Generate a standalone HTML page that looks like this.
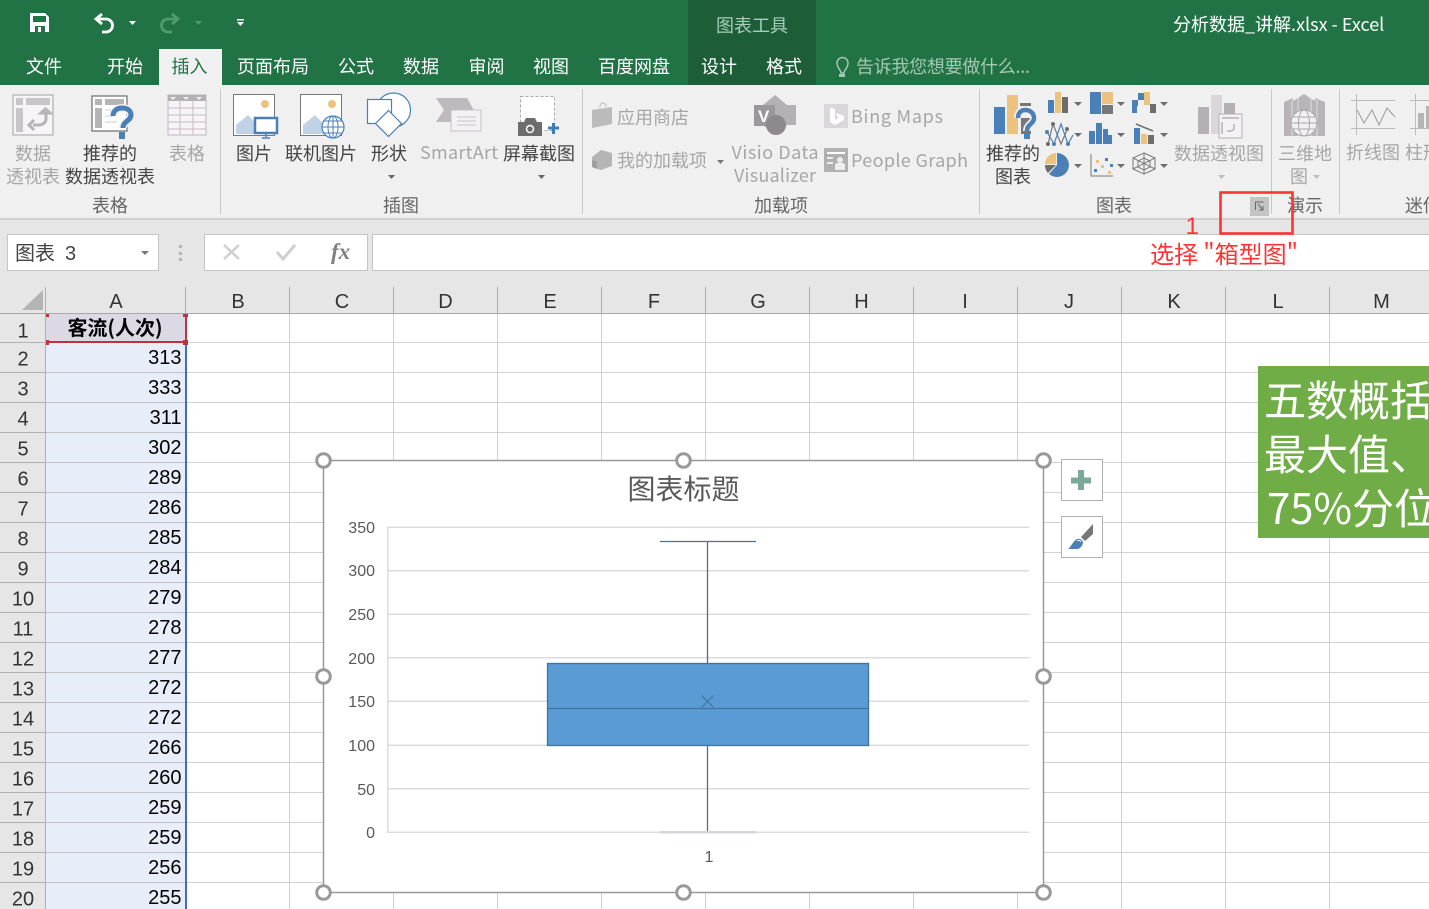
<!DOCTYPE html>
<html lang="zh"><head><meta charset="utf-8"><title>Excel</title>
<style>
html,body{margin:0;padding:0;width:1429px;height:909px;overflow:hidden;background:#fff}
svg{display:block}
text{font-family:"Liberation Sans","Noto Sans CJK SC",sans-serif;font-size:18px}
.cjk text,text.cjk{font-family:"Noto Sans CJK SC","Liberation Sans",sans-serif}
.w{fill:#fff}.d{fill:#a6a6a6}.n{fill:#444}.g{fill:#666}
.m{text-anchor:middle}.e{text-anchor:end}
.num{font-size:20px;fill:#000;text-anchor:end;font-family:"Liberation Sans",sans-serif}
.rh{font-size:20px;fill:#333;text-anchor:middle;font-family:"Liberation Sans",sans-serif}
.ch{font-size:20px;fill:#333;text-anchor:middle;font-family:"Liberation Sans",sans-serif}
.ax{font-size:16px;fill:#595959;text-anchor:end;font-family:"Liberation Sans",sans-serif}
</style></head><body>
<svg width="1429" height="909" viewBox="0 0 1429 909" xmlns="http://www.w3.org/2000/svg">
<!-- title / tabs -->
<rect width="1429" height="85" fill="#217346"/>
<rect x="688" width="128" height="85" fill="#1d5e39"/>
<rect x="159" y="49" width="63" height="36" fill="#f0f0f0"/>
<rect y="85" width="1429" height="133" fill="#f0f0f0"/>
<rect y="218" width="1429" height="2" fill="#d2d2d2"/>
<rect y="220" width="1429" height="94" fill="#e6e6e6"/>

<!-- QAT -->
<path d="M30 13h15l4 4v15H30z" fill="#fff"/><rect x="33" y="16" width="13" height="6" fill="#217346"/><rect x="35" y="26" width="10" height="6" fill="#217346"/><rect x="38" y="27" width="3" height="5" fill="#fff"/>
<path d="M97 19H106a6.500 6.500 0 0 1 0 13H102" fill="none" stroke="#fff" stroke-width="2.800"/><path d="M102 14l-6 5 6 5" fill="none" stroke="#fff" stroke-width="2.800"/>
<path d="M129 21h7l-3.500 4z" fill="#fff"/>
<path d="M177 19H168a6.500 6.500 0 0 0 0 13H172" fill="none" stroke="#4e9a6d" stroke-width="2.800"/><path d="M172 14l6 5-6 5" fill="none" stroke="#4e9a6d" stroke-width="2.800"/>
<path d="M195 21h7l-3.500 4z" fill="#4e9a6d"/>
<rect x="237" y="19" width="7" height="1.500" fill="#fff"/><path d="M237 22h7l-3.500 4z" fill="#fff"/>

<g class="cjk">
<text x="716" y="32" fill="#a9cdb8">图表工具</text>
<text x="1173" y="31" class="w">分析数据_讲解.xlsx - Excel</text>
<text x="26" y="73" class="w">文件</text>
<text x="107" y="73" class="w">开始</text>
<text x="171.500" y="73" fill="#217346">插入</text>
<text x="237" y="73" class="w">页面布局</text>
<text x="338" y="73" class="w">公式</text>
<text x="403" y="73" class="w">数据</text>
<text x="468.500" y="73" class="w">审阅</text>
<text x="533" y="73" class="w">视图</text>
<text x="598" y="73" class="w">百度网盘</text>
<text x="701" y="73" class="w">设计</text>
<text x="766" y="73" class="w">格式</text>
<text x="856" y="73" fill="#a3c9b2" textLength="174">告诉我您想要做什么...</text>
</g>
<path d="M841 73c0-3-4-5-4-10a5.500 5.500 0 0 1 11 0c0 5-4 7-4 10z" fill="none" stroke="#a3c9b2" stroke-width="1.500"/><rect x="839" y="74" width="6" height="3" fill="#a3c9b2"/>

<!-- ribbon separators -->
<g fill="#c8c8c8"><rect x="220" y="89" width="1" height="125"/><rect x="582" y="89" width="1" height="125"/><rect x="979" y="89" width="1" height="125"/><rect x="1271" y="89" width="1" height="125"/><rect x="1339" y="89" width="1" height="125"/></g>

<!-- 表格 group icons -->
<rect x="13" y="95" width="40" height="40" fill="#f6f4f6" stroke="#bdbdbd" stroke-width="1.500"/><rect x="16" y="98" width="7" height="7" fill="#c8c6c8"/><rect x="26" y="98" width="24" height="7" fill="#c8c6c8"/><rect x="16" y="108" width="7" height="24" fill="#c8c6c8"/>
<path d="M46 113v6c0 4-4 6-8 6h-5M41 113h9l-4.500-4zM34 120l-5 5 5 5" fill="none" stroke="#b5b5b5" stroke-width="3"/>
<rect x="92" y="96" width="35" height="35" fill="#fff" stroke="#777" stroke-width="1.300"/><rect x="95" y="99" width="7" height="6" fill="#b4b4b4"/><rect x="105" y="99" width="19" height="6" fill="#b4b4b4"/><rect x="95" y="108" width="7" height="20" fill="#b4b4b4"/>
<g fill="none" stroke="#ccc"><path d="M105 110h8M105 116h8M105 122h12"/></g>
<path d="M113 116c0-5 4-8 9-8c6 0 9 3 9 7c0 6-8 6-8 13" fill="none" stroke="#f0f0f0" stroke-width="8"/>
<path d="M113 116c0-5 4-8 9-8c6 0 9 3 9 7c0 6-8 6-8 13" fill="none" stroke="#4a7fb8" stroke-width="5"/><rect x="119" y="132" width="6" height="7" fill="#4a7fb8"/>
<rect x="168" y="95" width="38" height="40" fill="#f6f4f6" stroke="#bcb8bc"/><rect x="168" y="95" width="38" height="6" fill="#b4b0b4"/><path d="M170 97h6l-3 3zM183 97h6l-3 3zM196 97h6l-3 3z" fill="#f0f0f0"/>
<g stroke="#cbb8c6" fill="none"><path d="M168 108h38M168 115h38M168 122h38M168 129h38M180 101v34M193 101v34"/></g>
<!-- 插图 -->
<rect x="233.500" y="94.500" width="41" height="41" fill="#fff" stroke="#777"/><circle cx="265" cy="104" r="4" fill="#edc27c"/><path d="M236 134v-9l12-10 13 14v5z" fill="#bfd2e6"/>
<rect x="255" y="118" width="22" height="15" fill="#fff" stroke="#4a7fb8" stroke-width="2.500"/><path d="M266 134v3M262 138h8" stroke="#4a7fb8" stroke-width="1.500"/>
<rect x="300.500" y="94.500" width="41" height="41" fill="#fff" stroke="#777"/><circle cx="332" cy="104" r="4" fill="#edc27c"/><path d="M303 134v-9l12-10 13 14v5z" fill="#bfd2e6"/>
<circle cx="333" cy="127" r="11" fill="#fff" stroke="#4a7fb8" stroke-width="1.200"/><ellipse cx="333" cy="127" rx="5" ry="11" fill="none" stroke="#4a7fb8"/><path d="M322 127h22M324 121h18M324 133h18M333 116v22" stroke="#4a7fb8" fill="none"/>
<circle cx="393.500" cy="110" r="17" fill="#fff" stroke="#4a7fb8" stroke-width="1.200"/><rect x="367.500" y="99.500" width="24" height="24" fill="#fff" stroke="#4a7fb8" stroke-width="1.200"/><path d="M388.500 110.500l13 13-13 13-13-13z" fill="#fff" stroke="#4a7fb8" stroke-width="1.200"/>
<!-- SmartArt -->
<path d="M436 98h31l9 16h-20v8h-20l8-12z" fill="#bdb9bd"/><rect x="451" y="110" width="30" height="21" fill="#f4f1f4" stroke="#c4bfc4"/><g stroke="#c8c4c8"><path d="M457 117h19M457 121h19M457 125h19"/></g>
<!-- screenshot -->
<rect x="520.500" y="96.500" width="34" height="34" fill="#fff" stroke="#aaa" stroke-dasharray="3 2"/><path d="M518 122h6l2-4h9l2 4h5v14h-24z" fill="#6d6d6d"/><circle cx="530" cy="129" r="3.500" fill="#6d6d6d" stroke="#fff" stroke-width="1.500"/><path d="M548 128h11M553.500 123v11" stroke="#3f7cbc" stroke-width="3"/>
<!-- Add-ins -->
<path d="M592 110l20-3v17l-20 4z" fill="#bbb"/><path d="M600 108v-2a3 3 0 0 1 6 0v1" fill="none" stroke="#bbb"/>
<path d="M601 150l11 3v13l-11 4-9-3v-10z" fill="#b5b5b5"/><path d="M592 160l5 2v7l-5-2z" fill="#9e9e9e"/>
<path d="M717 160h7l-3.500 4z" fill="#777"/>
<path d="M775 95l12 10h9v20h-9l-12 10-12-10v-20z" fill="#b4b0b4"/><rect x="754" y="105" width="21" height="21" fill="#9b979b"/><circle cx="776" cy="125" r="10" fill="#8d898d"/><text x="758" y="122" class="w" style="font-size:17px;font-weight:bold">V</text>
<rect x="824" y="104" width="24" height="24" fill="#d9d7d9"/><path d="M830 108v14l5 3 9-5v-4l-8-3 2 5-3 2v-11z" fill="#fff"/>
<rect x="824" y="148" width="24" height="24" fill="#b0b0b0"/><rect x="827" y="152" width="18" height="2" fill="#fff"/><rect x="827" y="157" width="6" height="2" fill="#eee"/><rect x="827" y="162" width="6" height="2" fill="#eee"/><circle cx="840" cy="160" r="3" fill="#eee"/><path d="M835 170v-5c0-2 2-2 5-2s5 0 5 2v5z" fill="#eee"/>
<!-- charts -->
<rect x="994" y="107" width="11" height="27" fill="#4a7fb8"/><rect x="1007" y="95" width="11" height="39" fill="#ecc27f"/><rect x="1020" y="103" width="11" height="3" fill="#777"/><rect x="1021" y="118" width="10" height="16" fill="#777"/>
<path d="M1018 118c0-5 3-8 7-8c5 0 9 3 9 8c0 6-7 6-7 13" fill="none" stroke="#f0f0f0" stroke-width="8"/>
<path d="M1018 118c0-5 3-8 7-8c5 0 9 3 9 8c0 6-7 6-7 13" fill="none" stroke="#4a7fb8" stroke-width="4.500"/><rect x="1024" y="133" width="6" height="6" fill="#4a7fb8"/>
<rect x="1048" y="100" width="6" height="13" fill="#4a7fb8"/><rect x="1055" y="92" width="6" height="21" fill="#ecc27f"/><rect x="1062" y="97" width="6" height="16" fill="#6d6d6d"/><path d="M1074 102h8l-4 4z" fill="#6d6d6d"/>
<rect x="1090" y="92" width="11" height="22" fill="#4a7fb8"/><rect x="1102" y="92" width="11" height="12" fill="#ecc27f"/><rect x="1102" y="105" width="11" height="9" fill="#777"/><path d="M1117 102h8l-4 4z" fill="#6d6d6d"/>
<path d="M1132 113v-13h6v-7h6v7h-6v6h-1v7z" fill="#4a7fb8"/><rect x="1144" y="92" width="6" height="13" fill="#ecc27f"/><rect x="1150" y="104" width="6" height="9" fill="#6d6d6d"/><path d="M1160 102h8l-4 4z" fill="#6d6d6d"/>
<path d="M1048 144l5-20 8 20 6-14" fill="none" stroke="#777" stroke-width="1.200"/><path d="M1047 132l7 12 7-20 7 20 5-9" fill="none" stroke="#4a7fb8" stroke-width="1.200"/>
<g fill="#6d6d6d"><circle cx="1053" cy="124" r="2"/><circle cx="1048" cy="144" r="2"/><circle cx="1067" cy="129" r="2"/></g><g fill="#4a7fb8"><circle cx="1047" cy="132" r="2"/><circle cx="1054" cy="144" r="2"/><circle cx="1068" cy="144" r="2"/></g>
<path d="M1074 133h8l-4 4z" fill="#6d6d6d"/>
<rect x="1089" y="131" width="6" height="13" fill="#4a7fb8"/><rect x="1096" y="123" width="6" height="21" fill="#4a7fb8"/><rect x="1103" y="129" width="5" height="15" fill="#4a7fb8"/><rect x="1107" y="135" width="5" height="9" fill="#4a7fb8"/><path d="M1117 133h8l-4 4z" fill="#6d6d6d"/>
<rect x="1134" y="128" width="6" height="16" fill="#4a7fb8"/><rect x="1141" y="134" width="6" height="10" fill="#ecc27f"/><rect x="1148" y="135" width="6" height="9" fill="#6d6d6d"/><path d="M1136 124l17 7" stroke="#6d6d6d" stroke-width="1.500"/><path d="M1160 133h8l-4 4z" fill="#6d6d6d"/>
<path d="M1057 153a12 12 0 1 1-8 21l8-9z" fill="#4a7fb8"/><path d="M1056 153a11 11 0 0 0-11 11h11z" fill="#ecc27f"/><path d="M1045 165h11l-8 8c-2-2-3-5-3-8z" fill="#6d6d6d"/><path d="M1074 164h8l-4 4z" fill="#6d6d6d"/>
<path d="M1091 154v22h22" fill="none" stroke="#777"/><rect x="1094" y="169" width="3" height="3" fill="#4a7fb8"/><rect x="1096" y="160" width="3" height="3" fill="#ecc27f"/><rect x="1101" y="165" width="3" height="3" fill="#ecc27f"/><rect x="1105" y="158" width="3" height="3" fill="#4a7fb8"/><rect x="1108" y="171" width="3" height="3" fill="#ecc27f"/><rect x="1110" y="164" width="3" height="3" fill="#4a7fb8"/><path d="M1117 164h8l-4 4z" fill="#6d6d6d"/>
<path d="M1144 153l11 5v11l-11 5-11-5v-11zM1144 153v21M1133 158l22 11M1155 158l-22 11M1144 158l6 3v6l-6 3-6-3v-6z" fill="none" stroke="#777" stroke-width="1"/><path d="M1160 164h8l-4 4z" fill="#6d6d6d"/>
<!-- pivot chart -->
<rect x="1198" y="107" width="11" height="27" fill="#b4b0b4"/><rect x="1211" y="95" width="11" height="39" fill="#dad6da"/><rect x="1224" y="103" width="11" height="11" fill="#b4b0b4"/><rect x="1219" y="114" width="23" height="24" fill="#f4f2f4" stroke="#b4b0b4"/><path d="M1222 118h17M1222 122v12M1234 124v4c0 2-2 3-4 3h-3" fill="none" stroke="#b4b0b4" stroke-width="1.500"/>
<!-- 3D map -->
<path d="M1284 102l9-4v3l5-3 6-4 6 4 5 3v-3l10 4v34h-41z" fill="#b8b4b8"/><path d="M1292 100v36M1298 98v38M1311 98v38M1317 100v36" stroke="#e0dde0"/>
<circle cx="1304" cy="123" r="13" fill="#f2f0f2" stroke="#aaa"/><ellipse cx="1304" cy="123" rx="5.500" ry="13" fill="none" stroke="#aaa"/><path d="M1291 123h26M1293 117h22M1293 129h22" stroke="#aaa"/>
<!-- sparklines -->
<path d="M1351 100.500h44M1351 128.500h44M1356.500 94v41" fill="none" stroke="#bbb"/><path d="M1357 110l7 13 8-13 7 15 8-17 8 9" fill="none" stroke="#999"/>
<path d="M1410 100.500h19M1410 128.500h19M1415.500 94v41" fill="none" stroke="#bbb"/><rect x="1418" y="113" width="6" height="15" fill="#b5b5b5"/><rect x="1426" y="106" width="3" height="22" fill="#b5b5b5"/>

<!-- ribbon labels -->
<g class="cjk">
<text x="33" y="160" class="d m">数据</text><text x="33" y="183" class="d m">透视表</text>
<text x="110" y="160" class="n m">推荐的</text><text x="110" y="183" class="n m">数据透视表</text>
<text x="187" y="160" class="d m">表格</text>
<text x="110" y="212" class="g m">表格</text>
<text x="254" y="160" class="n m">图片</text>
<text x="321" y="160" class="n m">联机图片</text>
<text x="389" y="160" class="n m">形状</text>
<text x="459" y="159" class="d m" textLength="78">SmartArt</text>
<text x="539" y="160" class="n m">屏幕截图</text>
<text x="401" y="212" class="g m">插图</text>
<text x="617" y="124" class="d">应用商店</text>
<text x="617" y="167" class="d">我的加载项</text>
<text x="775" y="159" class="d m" textLength="87">Visio Data</text>
<text x="775" y="182" class="d m" textLength="82">Visualizer</text>
<text x="851" y="123" class="d" textLength="92">Bing Maps</text>
<text x="851" y="167" class="d" textLength="117">People Graph</text>
<text x="781" y="212" class="g m">加载项</text>
<text x="1013" y="160" class="n m">推荐的</text><text x="1013" y="183" class="n m">图表</text>
<text x="1219" y="160" class="d m">数据透视图</text>
<text x="1114" y="212" class="g m">图表</text>
<text x="1305" y="160" class="d m">三维地</text><text x="1299" y="183" class="d m">图</text>
<text x="1305" y="212" class="g m">演示</text>
<text x="1346" y="159" class="d">折线图</text><text x="1405" y="159" class="d">柱形图</text>
<text x="1405" y="212" class="g">迷你图</text>
</g>
<path d="M388 175h7l-3.500 4zM538 175h7l-3.500 4z" fill="#666"/><path d="M1218 175h7l-3.500 4zM1313 175h7l-3.500 4z" fill="#bbb"/>

<!-- launcher -->
<rect x="1250" y="197" width="19" height="19" fill="#c4c4c4"/><path d="M1255.500 210v-8h8M1258 204l5 6M1259 210h4v-4" fill="none" stroke="#666"/>

<!-- formula bar -->
<rect x="7.500" y="234.500" width="151" height="36" fill="#fff" stroke="#c6c6c6"/>
<text x="15" y="260" class="cjk" style="font-size:20px" fill="#444">图表</text><text x="65" y="260" style="font-size:20px" fill="#444">3</text>
<path d="M141 251h8l-4 4z" fill="#777"/>
<path d="M179 245h3v3h-3zM179 252h3v3h-3zM179 258h3v3h-3z" fill="#b4b4b4"/>
<rect x="204.500" y="234.500" width="163" height="36" fill="#fff" stroke="#c6c6c6"/>
<path d="M224 245l15 14M239 245l-15 14" stroke="#cfcfcf" stroke-width="2.500"/>
<path d="M277 252l6 7 12-14" fill="none" stroke="#cfcfcf" stroke-width="3"/>
<text x="331" y="259" style="font-family:'Liberation Serif',serif;font-style:italic;font-weight:bold;font-size:23px" fill="#808080">fx</text>
<rect x="372.500" y="234.500" width="1060" height="36" fill="#fff" stroke="#c6c6c6"/>

<!-- sheet -->
<rect y="314" width="1429" height="595" fill="#fff"/>
<rect y="314" width="46" height="595" fill="#e6e6e6"/>
<rect x="46" y="342" width="139" height="567" fill="#e7eef9"/>
<rect x="46" y="314" width="139" height="28" fill="#dcd9e5"/>
<path d="M43 290v20H22z" fill="#b4b4b4"/>
<g fill="#d2d2d2">
<rect x="186" y="342" width="1243" height="1"/><rect x="186" y="372" width="1243" height="1"/><rect x="186" y="402" width="1243" height="1"/><rect x="186" y="432" width="1243" height="1"/><rect x="186" y="462" width="1243" height="1"/><rect x="186" y="492" width="1243" height="1"/><rect x="186" y="522" width="1243" height="1"/><rect x="186" y="552" width="1243" height="1"/><rect x="186" y="582" width="1243" height="1"/><rect x="186" y="612" width="1243" height="1"/><rect x="186" y="642" width="1243" height="1"/><rect x="186" y="672" width="1243" height="1"/><rect x="186" y="702" width="1243" height="1"/><rect x="186" y="732" width="1243" height="1"/><rect x="186" y="762" width="1243" height="1"/><rect x="186" y="792" width="1243" height="1"/><rect x="186" y="822" width="1243" height="1"/><rect x="186" y="852" width="1243" height="1"/><rect x="186" y="882" width="1243" height="1"/>
<rect x="289" y="314" width="1" height="595"/><rect x="393" y="314" width="1" height="595"/><rect x="497" y="314" width="1" height="595"/><rect x="601" y="314" width="1" height="595"/><rect x="705" y="314" width="1" height="595"/><rect x="809" y="314" width="1" height="595"/><rect x="913" y="314" width="1" height="595"/><rect x="1017" y="314" width="1" height="595"/><rect x="1121" y="314" width="1" height="595"/><rect x="1225" y="314" width="1" height="595"/><rect x="1329" y="314" width="1" height="595"/>
</g>
<g fill="#c0c2c8">
<rect x="46" y="372" width="139" height="1"/><rect x="46" y="402" width="139" height="1"/><rect x="46" y="432" width="139" height="1"/><rect x="46" y="462" width="139" height="1"/><rect x="46" y="492" width="139" height="1"/><rect x="46" y="522" width="139" height="1"/><rect x="46" y="552" width="139" height="1"/><rect x="46" y="582" width="139" height="1"/><rect x="46" y="612" width="139" height="1"/><rect x="46" y="642" width="139" height="1"/><rect x="46" y="672" width="139" height="1"/><rect x="46" y="702" width="139" height="1"/><rect x="46" y="732" width="139" height="1"/><rect x="46" y="762" width="139" height="1"/><rect x="46" y="792" width="139" height="1"/><rect x="46" y="822" width="139" height="1"/><rect x="46" y="852" width="139" height="1"/><rect x="46" y="882" width="139" height="1"/>
</g>
<g fill="#b0b0b0">
<rect y="342" width="46" height="1"/><rect y="372" width="46" height="1"/><rect y="402" width="46" height="1"/><rect y="432" width="46" height="1"/><rect y="462" width="46" height="1"/><rect y="492" width="46" height="1"/><rect y="522" width="46" height="1"/><rect y="552" width="46" height="1"/><rect y="582" width="46" height="1"/><rect y="612" width="46" height="1"/><rect y="642" width="46" height="1"/><rect y="672" width="46" height="1"/><rect y="702" width="46" height="1"/><rect y="732" width="46" height="1"/><rect y="762" width="46" height="1"/><rect y="792" width="46" height="1"/><rect y="822" width="46" height="1"/><rect y="852" width="46" height="1"/><rect y="882" width="46" height="1"/>
<rect x="45" y="287" width="1" height="622"/>
<rect x="185" y="287" width="1" height="27"/><rect x="289" y="287" width="1" height="27"/><rect x="393" y="287" width="1" height="27"/><rect x="497" y="287" width="1" height="27"/><rect x="601" y="287" width="1" height="27"/><rect x="705" y="287" width="1" height="27"/><rect x="809" y="287" width="1" height="27"/><rect x="913" y="287" width="1" height="27"/><rect x="1017" y="287" width="1" height="27"/><rect x="1121" y="287" width="1" height="27"/><rect x="1225" y="287" width="1" height="27"/><rect x="1329" y="287" width="1" height="27"/>
<rect y="313" width="1429" height="1" fill="#a8a8a8"/>
</g>
<!-- selection -->
<rect x="185" y="342" width="2" height="567" fill="#3d6cc0"/>
<rect x="46" y="341" width="141" height="2" fill="#c0303f"/>
<rect x="185" y="314" width="2" height="29" fill="#c0303f"/>
<rect x="183" y="314" width="5" height="3" fill="#c0303f"/><rect x="46" y="314" width="3" height="3" fill="#c0303f"/>
<rect x="46" y="340" width="3" height="5" fill="#c0303f"/><rect x="183" y="340" width="5" height="5" fill="#c0303f"/>

<!-- column headers -->
<g transform="translate(0,-1)">
<text x="116" y="309" class="ch">A</text><text x="238" y="309" class="ch">B</text><text x="342" y="309" class="ch">C</text><text x="445.500" y="309" class="ch">D</text><text x="550" y="309" class="ch">E</text><text x="654" y="309" class="ch">F</text><text x="758" y="309" class="ch">G</text><text x="861.500" y="309" class="ch">H</text><text x="965" y="309" class="ch">I</text><text x="1069" y="309" class="ch">J</text><text x="1174" y="309" class="ch">K</text><text x="1278" y="309" class="ch">L</text><text x="1381.500" y="309" class="ch">M</text>
</g>
<!-- row headers -->
<g transform="translate(0,-0.700)">
<text x="23" y="338" class="rh">1</text><text x="23" y="366" class="rh">2</text><text x="23" y="396" class="rh">3</text><text x="23" y="426" class="rh">4</text><text x="23" y="456" class="rh">5</text><text x="23" y="486" class="rh">6</text><text x="23" y="516" class="rh">7</text><text x="23" y="546" class="rh">8</text><text x="23" y="576" class="rh">9</text><text x="23" y="606" class="rh">10</text><text x="23" y="636" class="rh">11</text><text x="23" y="666" class="rh">12</text><text x="23" y="696" class="rh">13</text><text x="23" y="726" class="rh">14</text><text x="23" y="756" class="rh">15</text><text x="23" y="786" class="rh">16</text><text x="23" y="816" class="rh">17</text><text x="23" y="846" class="rh">18</text><text x="23" y="876" class="rh">19</text><text x="23" y="906" class="rh">20</text>
</g>
<!-- cells -->
<text x="115" y="335" class="cjk m" style="font-size:20px;font-weight:bold" fill="#000">客流(人次)</text>
<g transform="translate(0.500,-1)">
<text x="181" y="365" class="num">313</text><text x="181" y="395" class="num">333</text><text x="181" y="425" class="num">311</text><text x="181" y="455" class="num">302</text><text x="181" y="485" class="num">289</text><text x="181" y="515" class="num">286</text><text x="181" y="545" class="num">285</text><text x="181" y="575" class="num">284</text><text x="181" y="605" class="num">279</text><text x="181" y="635" class="num">278</text><text x="181" y="665" class="num">277</text><text x="181" y="695" class="num">272</text><text x="181" y="725" class="num">272</text><text x="181" y="755" class="num">266</text><text x="181" y="785" class="num">260</text><text x="181" y="815" class="num">259</text><text x="181" y="845" class="num">259</text><text x="181" y="875" class="num">256</text><text x="181" y="905" class="num">255</text>
</g>

<!-- green note -->
<rect x="1258" y="366" width="171" height="172" fill="#70ad47"/>
<g class="cjk"><text x="1264" y="416" class="w" style="font-size:42px">五数概括</text><text x="1264" y="470" class="w" style="font-size:42px">最大值、</text><text x="1267" y="524" class="w" style="font-size:42px" textLength="85">75%</text><text x="1352" y="524" class="w" style="font-size:42px">分位</text></g>

<!-- chart -->
<rect x="323.500" y="460.500" width="720" height="432" fill="#fff" stroke="#9a9a9a" stroke-width="1.500"/>
<text x="683.500" y="499" class="cjk m" style="font-size:28px" fill="#595959">图表标题</text>
<g fill="#dcdcdc">
<rect x="388" y="526.500" width="641" height="1.500"/><rect x="388" y="570" width="641" height="1.500"/><rect x="388" y="613.500" width="641" height="1.500"/><rect x="388" y="657" width="641" height="1.500"/><rect x="388" y="700.500" width="641" height="1.500"/><rect x="388" y="744.500" width="641" height="1.500"/><rect x="388" y="788" width="641" height="1.500"/><rect x="388" y="831.500" width="641" height="1.500"/><rect x="387" y="527" width="1.500" height="306"/>
</g>
<text x="375" y="533" class="ax">350</text><text x="375" y="576" class="ax">300</text><text x="375" y="620" class="ax">250</text><text x="375" y="664" class="ax">200</text><text x="375" y="707" class="ax">150</text><text x="375" y="751" class="ax">100</text><text x="375" y="795" class="ax">50</text><text x="375" y="838" class="ax">0</text>
<text x="709" y="862" class="ax" style="text-anchor:middle">1</text>
<path d="M707.500 541v122M707.500 746v86M660 541.500h96" fill="none" stroke="#41719c" stroke-width="1.300"/>
<rect x="660" y="831" width="96" height="2.500" fill="#d3d6da"/>
<rect x="547.500" y="663.500" width="321" height="82" fill="#5b9bd5" stroke="#41719c" stroke-width="1.300"/>
<path d="M548 708.500h320" stroke="#41719c" stroke-width="1.200"/>
<path d="M701.500 695.500l12 12M713.500 695.500l-12 12" stroke="#41719c" stroke-width="1.100"/>
<g fill="#fff" stroke="#999" stroke-width="3"><circle cx="323.500" cy="460.500" r="6.800"/><circle cx="683.500" cy="460.500" r="6.800"/><circle cx="1043.500" cy="460.500" r="6.800"/><circle cx="323.500" cy="676.500" r="6.800"/><circle cx="1043.500" cy="676.500" r="6.800"/><circle cx="323.500" cy="892.500" r="6.800"/><circle cx="683.500" cy="892.500" r="6.800"/><circle cx="1043.500" cy="892.500" r="6.800"/></g>
<rect x="1061.500" y="459.500" width="41" height="41" fill="#fff" stroke="#b0b0b0"/>
<path d="M1071 480.500h20M1081 470v20" stroke="#7aa998" stroke-width="6"/>
<rect x="1061.500" y="516.500" width="41" height="41" fill="#fff" stroke="#b0b0b0"/>
<path d="M1093 524v10l-8 7-4-4z" fill="#777"/><path d="M1068 549c3-2 5-8 9-10c3-1 5 1 6 3c0 3-2 6-5 7z" fill="#4a7fb8"/><path d="M1077 541c1-1 3-1 4 1" fill="none" stroke="#fff"/>

<!-- annotations -->
<rect x="1220.500" y="192.500" width="72" height="41" fill="none" stroke="#f33" stroke-width="2.600"/>
<text x="1185.500" y="234" style="font-size:24px" fill="#f33">1</text>
<text x="1150" y="263" class="cjk" style="font-size:24px" fill="#f33" textLength="148">选择 "箱型图"</text>
</svg>
</body></html>
